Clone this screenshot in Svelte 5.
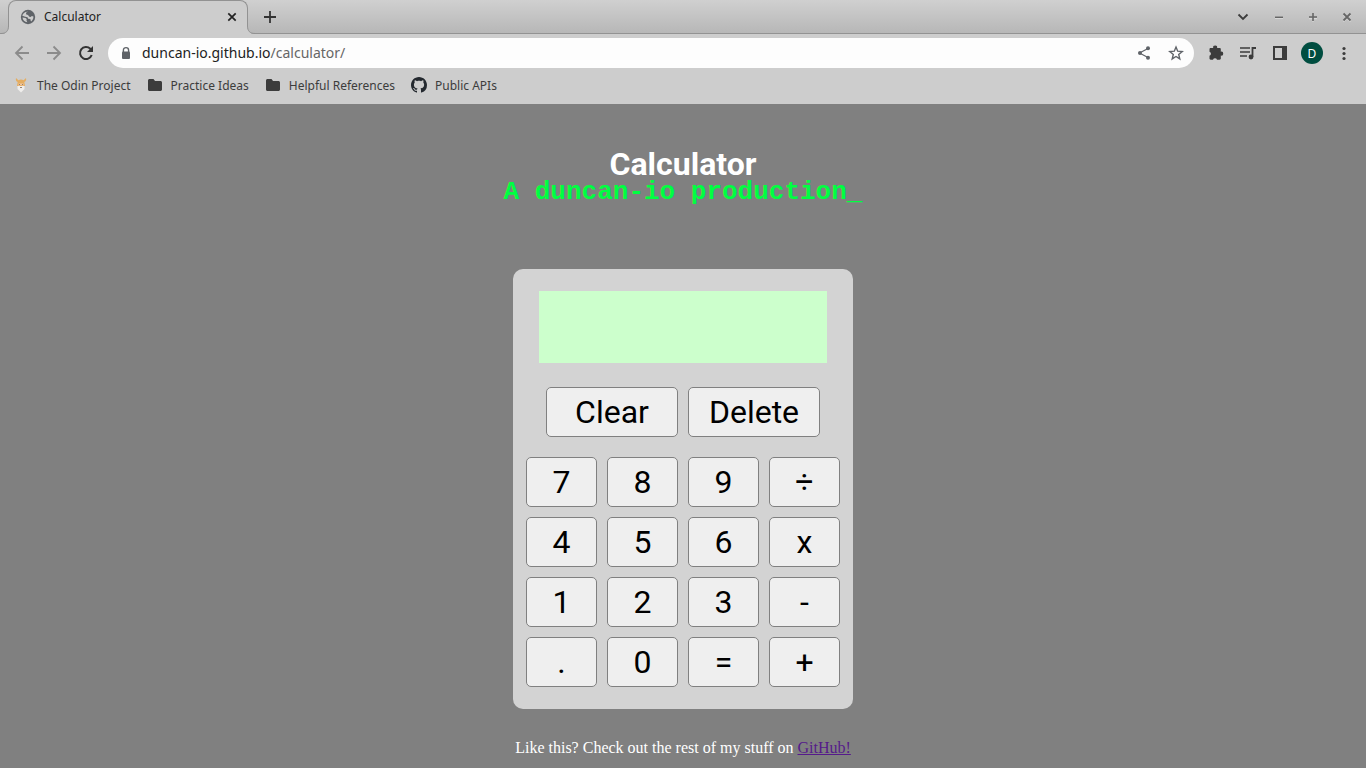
<script>
  const bookmarks = [
    { label: 'The Odin Project', icon: 'odin' },
    { label: 'Practice Ideas', icon: 'folder' },
    { label: 'Helpful References', icon: 'folder' },
    { label: 'Public APIs', icon: 'github' }
  ];
  const keys = ['7', '8', '9', '÷', '4', '5', '6', 'x', '1', '2', '3', '-', '.', '0', '=', '+'];
  let entry = $state('');
  let result = $state('');

  function press(key) {
    if (key !== '=') {
      entry += key;
      result = entry;
      return;
    }
    const parts = entry.match(/^(-?[\d.]+)([÷x+-])(-?[\d.]+)$/);
    if (!parts) return;
    const a = Number(parts[1]);
    const b = Number(parts[3]);
    const value = { '÷': a / b, x: a * b, '+': a + b, '-': a - b }[parts[2]];
    entry = String(value);
    result = entry;
  }
  function clear() {
    entry = '';
    result = '';
  }
  function remove() {
    entry = entry.slice(0, -1);
    result = entry;
  }
</script>

<div class="window">
  <header class="browser">
    <div class="strip">
      <div class="tab">
        <svg class="foot left" width="8" height="8" viewBox="0 0 8 8"><path d="M8 0v8H0C5 8 7.500 5 7.500 0Z" fill="#cdcdcd" /><path d="M0 7.500C5 7.500 7.500 5 7.500 0" fill="none" stroke="#929292" /></svg>
        <svg width="16" height="16" viewBox="0 0 16 16"><circle cx="8" cy="8" r="7.200" fill="#5f6368" /><path d="M8.300 2.400 6.200 3.600l-.2 1.700 2 .8 1.300 1.600 1.400.2 1.100-.9 1.600.4c.2 1.900-.8 3.900-2.300 5-.7-.5-.3-1.600-.9-2.300l-2-.4-.7-1.500-2.300-.5-2.800-1C2.600 4.600 5 2.500 8.300 2.400ZM2.500 8.600l3 .3 1.200 1.200-.2 1.500.8 1.700C4.700 13 2.700 11 2.500 8.600Z" fill="#cdcdcd" /></svg>
        <span class="tab-name">Calculator</span>
        <button class="plain tab-close" aria-label="Close tab"><svg width="16" height="16" viewBox="0 0 16 16"><path d="m4.300 4.300 7.400 7.400m0-7.400-7.400 7.400" stroke="#222" stroke-width="1.700" /></svg></button>
        <svg class="foot right" width="8" height="8" viewBox="0 0 8 8"><path d="M0 0v8h8C3 8 .5 5 .5 0Z" fill="#cdcdcd" /><path d="M8 7.500C3 7.500.5 5 .5 0" fill="none" stroke="#929292" /></svg>
      </div>
      <button class="plain add" aria-label="New tab"><svg width="16" height="16" viewBox="0 0 16 16"><path d="M8 2v12M2 8h12" stroke="#333" stroke-width="1.800" /></svg></button>
      <div class="controls">
        <button class="plain tab-search" aria-label="Search tabs"><svg width="16" height="16" viewBox="0 0 16 16"><path d="m3.500 5.500 4.500 4.500 4.500-4.500" fill="none" stroke="#3c3c3c" stroke-width="1.800" /></svg></button>
        <button class="plain" aria-label="Minimize"><svg width="16" height="16" viewBox="0 0 16 16"><path d="M4 9.500h8" stroke="#ddd" /><path d="M4 8.300h8" stroke="#666" stroke-width="1.500" /></svg></button>
        <button class="plain" aria-label="Maximize"><svg width="16" height="16" viewBox="0 0 16 16"><path d="M4 9.700h8M8 12v1" stroke="#ddd" /><path d="M4 8h8M8 4v8" stroke="#666" stroke-width="1.600" /></svg></button>
        <button class="plain" aria-label="Close"><svg width="16" height="16" viewBox="0 0 16 16"><path d="m4.500 5.500 7 7m0-7-7 7" stroke="#ddd" stroke-width="1.500" /><path d="m4.500 4.500 7 7m0-7-7 7" stroke="#666" stroke-width="1.800" /></svg></button>
      </div>
    </div>

    <div class="toolbar">
      <nav class="history">
        <button class="plain" aria-label="Back"><svg width="16" height="16" viewBox="0 0 16 16"><path d="M15 8H2m6.500-6.500L2 8l6.500 6.500" fill="none" stroke="#8b8b8b" stroke-width="1.800" /></svg></button>
        <button class="plain" aria-label="Forward"><svg width="16" height="16" viewBox="0 0 16 16"><path d="M1 8h13M7.500 1.500 14 8l-6.500 6.500" fill="none" stroke="#8b8b8b" stroke-width="1.800" /></svg></button>
        <button class="plain" aria-label="Reload"><svg width="16" height="16" viewBox="0 0 16 16"><path d="M13.700 10A6 6 0 1 1 12.300 3.800L14 5.500" fill="none" stroke="#333" stroke-width="2" /><path d="M15 1v6H9Z" fill="#333" /></svg></button>
      </nav>
      <div class="omnibox">
        <svg width="16" height="16" viewBox="0 0 16 16"><path d="M5.400 7V5.200a2.600 2.600 0 0 1 5.200 0V7" fill="none" stroke="#5f6368" stroke-width="1.400" /><rect x="4" y="6.500" width="8" height="7.500" rx="1" fill="#5f6368" /></svg>
        <span class="address"><a href="#site">duncan-io.github.io<span>/calculator/</span></a></span>
        <button class="plain" aria-label="Share"><svg width="16" height="16" viewBox="0 0 16 16"><path d="m12 3.500-8.500 4.500 8.500 4.500" fill="none" stroke="#5f6368" stroke-width="1.200" /><circle cx="12" cy="3.300" r="2" fill="#5f6368" /><circle cx="4" cy="8" r="2" fill="#5f6368" /><circle cx="12" cy="12.700" r="2" fill="#5f6368" /></svg></button>
        <button class="plain" aria-label="Bookmark"><svg width="16" height="16" viewBox="0 0 16 16"><path d="m8 2 1.700 4.200 4.500.3-3.500 2.900 1.100 4.500L8 11.500l-3.800 2.400 1.100-4.500-3.500-2.900 4.500-.3Z" fill="none" stroke="#5f6368" stroke-width="1.400" /></svg></button>
      </div>
      <div class="actions">
        <button class="plain" aria-label="Extensions"><svg width="16" height="16" viewBox="0 0 16 16"><path d="M1.500 4.200c0-.7.5-1.200 1.200-1.200H5.200a2 2 0 1 1 3.900 0h2.500c.7 0 1.200.5 1.200 1.200v2.500a2 2 0 1 1 0 3.900v2.900c0 .7-.5 1.200-1.200 1.200H9a2.100 2.100 0 0 0-4 0H2.700c-.7 0-1.200-.5-1.200-1.200V10.700a2.100 2.100 0 0 0 0-4Z" fill="#3c3c3c" /></svg></button>
        <button class="plain" aria-label="Media controls"><svg width="16" height="16" viewBox="0 0 16 16"><path d="M0 3h10M0 7h10M0 11h7" stroke="#3c3c3c" stroke-width="1.600" /><path d="M12.500 12V3H16" fill="none" stroke="#3c3c3c" stroke-width="1.800" /><circle cx="11" cy="12" r="2.400" fill="#3c3c3c" /></svg></button>
        <button class="plain" aria-label="Side panel"><svg width="16" height="16" viewBox="0 0 16 16"><path fill-rule="evenodd" d="M1 1h14v14H1Zm2 2v10h7V3Z" fill="#3c3c3c" /></svg></button>
        <button class="plain profile" aria-label="Profile">D</button>
        <button class="plain" aria-label="Menu"><svg width="16" height="16" viewBox="0 0 16 16"><g fill="#3c3c3c"><circle cx="8" cy="3.500" r="1.600" /><circle cx="8" cy="8.500" r="1.600" /><circle cx="8" cy="13.500" r="1.600" /></g></svg></button>
      </div>
    </div>

    <nav class="bookmarks">
      {#each bookmarks as mark}
        <a href="#bookmark">
          {#if mark.icon === 'odin'}
            <svg width="16" height="16" viewBox="0 0 16 16"><path d="M4.500 8h7v4L8 15.500 4.500 12Z" fill="#f0eeec" /><path d="M3 1c-.6 2 .2 3.500 1.700 4L4 9h8l-.7-4C12.800 4.500 13.600 3 13 1l-2.400 2.200C9 2.300 7 2.300 5.400 3.200Z" fill="#e5ad60" /><path d="M5.500 6.500h5V9L8 8l-2.500 1Z" fill="#f1c7a0" /><path d="M6 7.500h1m2 0h1M7 10.500h2" stroke="#97836f" /></svg>
          {:else if mark.icon === 'folder'}
            <svg width="16" height="16" viewBox="0 0 16 16"><path d="M1 3.500C1 2.700 1.700 2 2.500 2h4L8 4h5.500c.8 0 1.500.7 1.500 1.500v7c0 .8-.7 1.500-1.500 1.500h-11C1.700 14 1 13.300 1 12.500Z" fill="#3c3c3c" /></svg>
          {:else}
            <svg width="16" height="16" viewBox="0 0 16 16"><path fill="#24292f" d="M8 0C3.580 0 0 3.580 0 8c0 3.540 2.290 6.530 5.470 7.590.4.070.55-.17.55-.38 0-.19-.01-.82-.01-1.490-2.010.37-2.530-.49-2.690-.94-.09-.23-.48-.94-.82-1.130-.28-.15-.68-.52-.01-.53.63-.01 1.080.58 1.230.82.72 1.210 1.870.87 2.330.66.070-.52.28-.87.51-1.070-1.780-.2-3.640-.89-3.640-3.950 0-.87.31-1.590.82-2.150-.08-.2-.36-1.020.08-2.120 0 0 .67-.21 2.200.82.64-.18 1.320-.27 2-.27s1.360.09 2 .27c1.530-1.040 2.200-.82 2.200-.82.44 1.100.16 1.920.08 2.120.51.56.82 1.270.82 2.150 0 3.070-1.870 3.750-3.650 3.950.29.25.54.73.54 1.480 0 1.070-.01 1.930-.01 2.200 0 .21.15.46.55.38A8.010 8.010 0 0 0 16 8c0-4.420-3.580-8-8-8Z" /></svg>
          {/if}
          {mark.label}
        </a>
      {/each}
    </nav>
  </header>

  <main>
    <h1>Calculator</h1>
    <p class="tagline">A duncan-io production_</p>
    <section class="calculator" aria-label="Calculator">
      <output class="display">{result}</output>
      <div class="edit">
        <button class="key" onclick={clear}>Clear</button>
        <button class="key" onclick={remove}>Delete</button>
      </div>
      <div class="pad">
        {#each keys as key}
          <button class="key" onclick={() => press(key)}>{key}</button>
        {/each}
      </div>
    </section>
    <footer>Like this? Check out the rest of my stuff on <a href="#github">GitHub!</a></footer>
  </main>
</div>

<style>
  :global(body) {
    margin: 0;
    background: #808080;
  }
  .window {
    min-height: 100vh;
    background: #808080;
  }
  svg {
    display: block;
    flex: none;
  }
  .browser {
    background: #cdcdcd;
    font-family: 'Noto Sans', sans-serif;
    font-size: 12px;
    color: #3c3c3c;
  }
  .plain {
    display: flex;
    align-items: center;
    justify-content: center;
    padding: 0;
    border: 0;
    background: none;
  }
  .strip {
    display: flex;
    align-items: center;
    box-sizing: border-box;
    height: 34px;
    padding: 0 11px 0 8px;
    border-bottom: 1px solid #929292;
    background: linear-gradient(#d0d0d0, #b7b7b7);
  }
  .tab {
    position: relative;
    display: flex;
    align-items: center;
    gap: 8px;
    box-sizing: border-box;
    width: 240px;
    height: 34px;
    margin-bottom: -1px;
    padding: 0 7px 2px 11px;
    border: 1px solid #929292;
    border-bottom: 0;
    border-radius: 8px 8px 0 0;
    background: #cdcdcd;
    color: #222;
  }
  .foot {
    position: absolute;
    bottom: 0;
  }
  .foot.left {
    left: -8px;
  }
  .foot.right {
    right: -8px;
  }
  .tab-name {
    flex: 1;
  }
  .add {
    margin-left: 14px;
  }
  .controls {
    display: flex;
    gap: 18px;
    margin-left: auto;
  }
  .tab-search {
    margin-right: 2px;
  }
  .toolbar {
    display: flex;
    align-items: center;
    height: 30px;
    padding: 4px 14px 0;
  }
  .history {
    display: flex;
    gap: 16px;
    margin-right: 14px;
  }
  .omnibox {
    display: flex;
    flex: 1;
    align-items: center;
    gap: 16px;
    height: 30px;
    padding: 0 10px;
    border-radius: 15px;
    background: #fdfdfd;
  }
  .address {
    flex: 1;
    margin-left: -8px;
    padding-bottom: 2px;
    font-size: 14px;
  }
  .address a {
    color: #222;
    text-decoration: none;
  }
  .address span {
    color: #666;
  }
  .actions {
    display: flex;
    align-items: center;
    gap: 16px;
    margin-left: 14px;
  }
  .profile {
    width: 22px;
    height: 22px;
    margin: 0 -3px;
    border-radius: 50%;
    background: #004d40;
    color: #fff;
    font: 12px 'Noto Sans', sans-serif;
  }
  .bookmarks {
    display: flex;
    align-items: center;
    gap: 16px;
    height: 34px;
    padding: 0 0 2px 13px;
  }
  .bookmarks a {
    display: flex;
    align-items: center;
    gap: 8px;
    color: #3c3c3c;
    text-decoration: none;
  }
  main {
    display: flex;
    flex-direction: column;
    align-items: center;
    padding: 41px 16px 10px;
  }
  h1 {
    margin: 0;
    color: #fff;
    font: bold 32px/38px Roboto, sans-serif;
  }
  .tagline {
    margin: 0;
    color: #00ff41;
    font: bold 26px/18px 'Liberation Mono', monospace;
  }
  .calculator {
    display: flex;
    flex-direction: column;
    align-items: center;
    box-sizing: border-box;
    width: 340px;
    margin-top: 68px;
    padding: 22px 13px;
    border-radius: 10px;
    background: #d3d3d3;
  }
  .display {
    display: flex;
    align-items: center;
    justify-content: flex-end;
    box-sizing: border-box;
    width: 288px;
    height: 72px;
    padding: 0 10px;
    overflow: hidden;
    background: #cfc;
    font: 32px Roboto, sans-serif;
  }
  .edit {
    display: grid;
    grid-template-columns: 132px 132px;
    gap: 10px;
    margin: 24px 0 20px;
  }
  .pad {
    display: grid;
    grid-template-columns: repeat(4, 1fr);
    gap: 10px;
    width: 100%;
  }
  .key {
    height: 50px;
    padding: 0;
    border: 1px solid #808080;
    border-radius: 5px;
    background: #efefef;
    color: #000;
    font: 32px Roboto, sans-serif;
  }
  footer {
    margin-top: 30px;
    color: #fff;
    font: 16px/18px 'Liberation Serif', serif;
  }
  footer a {
    color: #551a8b;
  }
</style>
